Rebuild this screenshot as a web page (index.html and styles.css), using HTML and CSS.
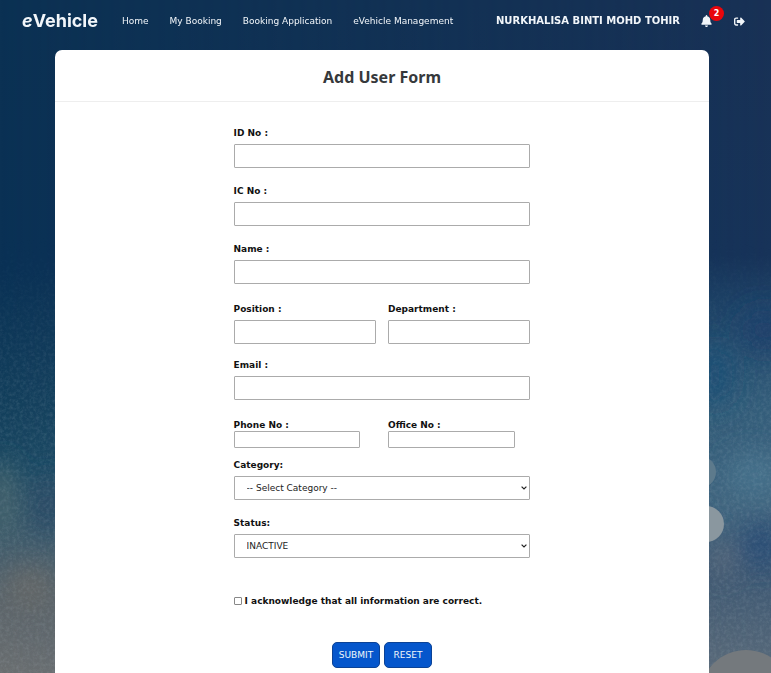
FILE: index.html
```html
<!DOCTYPE html>
<html lang="en">
<head>
<meta charset="utf-8">
<meta name="viewport" content="width=device-width, initial-scale=1">
<title>eVehicle - Add User Form</title>
<link rel="stylesheet" href="styles.css">
</head>
<body>
<svg class="backdrop" viewBox="0 0 771 673" preserveAspectRatio="none" aria-hidden="true">
  <defs>
    <linearGradient id="sky-left" x1="0" y1="0" x2="0" y2="1">
      <stop offset="0" stop-color="#0b3153"/>
      <stop offset=".4" stop-color="#0a3155"/>
      <stop offset=".6" stop-color="#133f5c"/>
      <stop offset=".7" stop-color="#1b4963"/>
      <stop offset=".8" stop-color="#405b6b"/>
      <stop offset=".9" stop-color="#5c656b"/>
      <stop offset="1" stop-color="#6a6e70"/>
    </linearGradient>
    <linearGradient id="sky-right" x1="0" y1="0" x2="0" y2="1">
      <stop offset="0" stop-color="#183155"/>
      <stop offset=".38" stop-color="#173359"/>
      <stop offset=".46" stop-color="#1f4468"/>
      <stop offset=".6" stop-color="#335d7a"/>
      <stop offset=".75" stop-color="#426680"/>
      <stop offset=".85" stop-color="#3d5873"/>
      <stop offset="1" stop-color="#596a7a"/>
    </linearGradient>
    <linearGradient id="across">
      <stop offset="0" stop-color="#000"/>
      <stop offset="1" stop-color="#fff"/>
    </linearGradient>
    <mask id="fade"><rect width="771" height="673" fill="url(#across)"/></mask>
    <filter id="soft" x="-50%" y="-50%" width="200%" height="200%"><feGaussianBlur stdDeviation="12"/></filter>
    <filter id="grain" x="0" y="0" width="100%" height="100%">
      <feTurbulence type="fractalNoise" baseFrequency=".3" numOctaves="3" seed="4"/>
      <feColorMatrix values="0 0 0 0 .6  0 0 0 0 .7  0 0 0 0 .75  1.2 0 0 0 -.45"/>
    </filter>
    <linearGradient id="grain-depth" x1="0" y1="0" x2="0" y2="1">
      <stop offset=".35" stop-color="#000"/>
      <stop offset=".6" stop-color="#fff"/>
    </linearGradient>
    <mask id="grain-fade"><rect width="771" height="673" fill="url(#grain-depth)"/></mask>
  </defs>
  <rect width="771" height="673" fill="url(#sky-left)"/>
  <rect width="771" height="673" fill="url(#sky-right)" mask="url(#fade)"/>
  <g filter="url(#soft)">
    <ellipse cx="48" cy="505" rx="18" ry="28" fill="#294c66"/>
    <ellipse cx="2" cy="500" rx="14" ry="40" fill="#45636d"/>
    <ellipse cx="30" cy="590" rx="26" ry="24" fill="#626668"/>
    <ellipse cx="715" cy="375" rx="18" ry="32" fill="#1f4f75"/>
    <ellipse cx="764" cy="330" rx="24" ry="22" fill="#1a3f6b"/>
    <ellipse cx="755" cy="475" rx="30" ry="22" fill="#45708a"/>
    <ellipse cx="762" cy="545" rx="22" ry="24" fill="#294d74"/>
    <ellipse cx="722" cy="560" rx="12" ry="16" fill="#59687a"/>
  </g>
  <g mask="url(#grain-fade)"><rect width="771" height="673" filter="url(#grain)" opacity=".2"/></g>
  <circle cx="700" cy="472" r="16" fill="#5d7a8c"/>
  <circle cx="706" cy="524" r="18" fill="#8a979f"/>
  <circle cx="746" cy="696" r="46" fill="#74797d"/>
</svg>

<header class="topbar">
  <a class="brand" href="#"><em>e</em>Vehicle</a>
  <nav class="menu">
    <a href="#">Home</a>
    <a href="#">My Booking</a>
    <a href="#">Booking Application</a>
    <a href="#">eVehicle Management</a>
  </nav>
  <div class="account">
    <a class="user" href="#">NURKHALISA BINTI MOHD TOHIR</a>
    <a class="bell" href="#" aria-label="Notifications">
      <svg viewBox="0 0 448 512" width="11" height="12" aria-hidden="true"><path fill="currentColor" d="M224 512c35 0 64-29 64-64H160c0 35 29 64 64 64zm215-150c-19-21-55-52-55-154 0-78-54-140-128-155V32a32 32 0 0 0-64 0v21C118 68 64 130 64 208c0 102-36 133-55 154-6 6-9 14-9 22 0 16 13 32 32 32h384c19 0 32-16 32-32 0-8-3-16-9-22z"/></svg>
      <span class="badge">2</span>
    </a>
    <a class="logout" href="#" aria-label="Log out">
      <svg viewBox="0 0 512 512" width="11" height="11" aria-hidden="true"><path fill="currentColor" d="M497 273 329 441c-15 15-41 4.500-41-17v-96H152c-13 0-24-11-24-24v-96c0-13 11-24 24-24h136V88c0-21 26-32 41-17l168 168c9 9 9 25 0 34zM192 436v-40c0-7-5-12-12-12H96c-18 0-32-14-32-32V160c0-18 14-32 32-32h84c7 0 12-5 12-12V76c0-7-5-12-12-12H96c-53 0-96 43-96 96v192c0 53 43 96 96 96h84c7 0 12-5 12-12z"/></svg>
    </a>
  </div>
</header>

<main class="page">
  <section class="card">
    <h1 class="title">Add User Form</h1>
    <form class="form">
      <div class="field"><label for="id-no">ID No :</label><input id="id-no" type="text"></div>
      <div class="field"><label for="ic-no">IC No :</label><input id="ic-no" type="text"></div>
      <div class="field"><label for="name">Name :</label><input id="name" type="text"></div>
      <div class="pair spaced">
        <div class="field"><label for="position">Position :</label><input id="position" type="text"></div>
        <div class="field"><label for="department">Department :</label><input id="department" type="text"></div>
      </div>
      <div class="field"><label for="email">Email :</label><input id="email" type="email"></div>
      <div class="pair compact">
        <div class="field"><label for="phone">Phone No :</label><input id="phone" type="tel"></div>
        <div class="field"><label for="office">Office No :</label><input id="office" type="tel"></div>
      </div>
      <div class="field">
        <label for="category">Category:</label>
        <div class="select">
          <select id="category"><option>-- Select Category --</option></select>
          <svg viewBox="0 0 6 4" width="6" height="4" aria-hidden="true"><path d="M.6.6 3 3 5.400.6" fill="none" stroke="#222" stroke-width="1.200"/></svg>
        </div>
      </div>
      <div class="field">
        <label for="status">Status:</label>
        <div class="select">
          <select id="status"><option>INACTIVE</option><option>ACTIVE</option></select>
          <svg viewBox="0 0 6 4" width="6" height="4" aria-hidden="true"><path d="M.6.6 3 3 5.400.6" fill="none" stroke="#222" stroke-width="1.200"/></svg>
        </div>
      </div>
      <div class="confirm">
        <input id="ack" type="checkbox"><label for="ack">I acknowledge that all information are correct.</label>
      </div>
      <div class="actions">
        <button type="submit">SUBMIT</button>
        <button type="reset">RESET</button>
      </div>
    </form>
  </section>
</main>
</body>
</html>
```
FILE: styles.css
```css
* {
  box-sizing: border-box;
}

body {
  display: flex;
  flex-direction: column;
  min-height: 100vh;
  margin: 0;
  background: #0b3153;
  color: #111;
  font: 9px/12px "DejaVu Sans", Verdana, sans-serif;
}

a {
  color: inherit;
  text-decoration: none;
}

.backdrop {
  position: fixed;
  inset: 0;
  z-index: -1;
  width: 100%;
  height: 100%;
}

.topbar {
  display: flex;
  align-items: center;
  height: 42px;
  padding: 0 26px 0 22px;
  color: #f2f6fa;
}

.brand {
  font: 700 18px/24px Inter, sans-serif;
}

.menu {
  display: flex;
  gap: 21px;
  margin-left: 24px;
}

.account {
  display: flex;
  align-items: center;
  margin-left: auto;
}

.user {
  font-size: 10px;
  font-weight: 700;
}

.bell {
  position: relative;
  display: flex;
  margin: 0 22px 0 21px;
}

.badge {
  position: absolute;
  left: 8px;
  bottom: 6px;
  width: 15px;
  height: 15px;
  border-radius: 50%;
  background: #e8060c;
  color: #fff;
  font-size: 8px;
  font-weight: 700;
  line-height: 15px;
  text-align: center;
}

.logout {
  display: flex;
}

.page {
  display: flex;
  flex: 1;
  padding: 8px 62px 0 55px;
}

.card {
  flex: 1;
  border-radius: 7px 7px 0 0;
  background: #fff;
}

.title {
  margin: 0;
  padding: 15px 0 12px;
  border-bottom: 1px solid #eee;
  color: #36393c;
  font: 700 16px/24px "Noto Sans", sans-serif;
  text-align: center;
}

.form {
  display: flex;
  flex-direction: column;
  gap: 17px;
  width: 46%;
  max-width: 480px;
  min-width: 297px;
  margin: 0 auto;
  padding: 25px 2px 5px;
}

.field {
  display: flex;
  flex-direction: column;
  gap: 5px;
}

label {
  font-weight: 700;
}

.field input,
select {
  width: 100%;
  height: 24px;
  margin: 0;
  padding: 0 12px;
  border: 1px solid #ababab;
  border-radius: 1px;
  background: #fff;
  color: #222;
  font: inherit;
}

.pair {
  display: grid;
  grid-template-columns: 1fr 1fr;
  gap: 12px;
}

.spaced {
  margin: 2px 0 -2px;
}

.compact {
  margin: 2px 0 -6px;
}

.compact .field {
  gap: 0;
}

.compact input {
  width: 89%;
  height: 17px;
}

.select {
  position: relative;
}

select {
  display: block;
  appearance: none;
}

.select svg {
  position: absolute;
  top: 10px;
  right: 3px;
}

.confirm {
  display: flex;
  align-items: center;
  gap: 3px;
  margin: 20px 0 18px;
}

.confirm input {
  width: 8px;
  height: 8px;
  margin: 0;
  border: 1px solid #888;
  border-radius: 1px;
  appearance: none;
}

.confirm input:checked {
  background: #0556cc;
}

.actions {
  display: flex;
  justify-content: center;
  gap: 4px;
}

button {
  width: 48px;
  height: 26px;
  padding: 0;
  border: 1px solid #0b4296;
  border-radius: 5px;
  background: #0556cc;
  color: #f2f6fa;
  font: inherit;
}
```
